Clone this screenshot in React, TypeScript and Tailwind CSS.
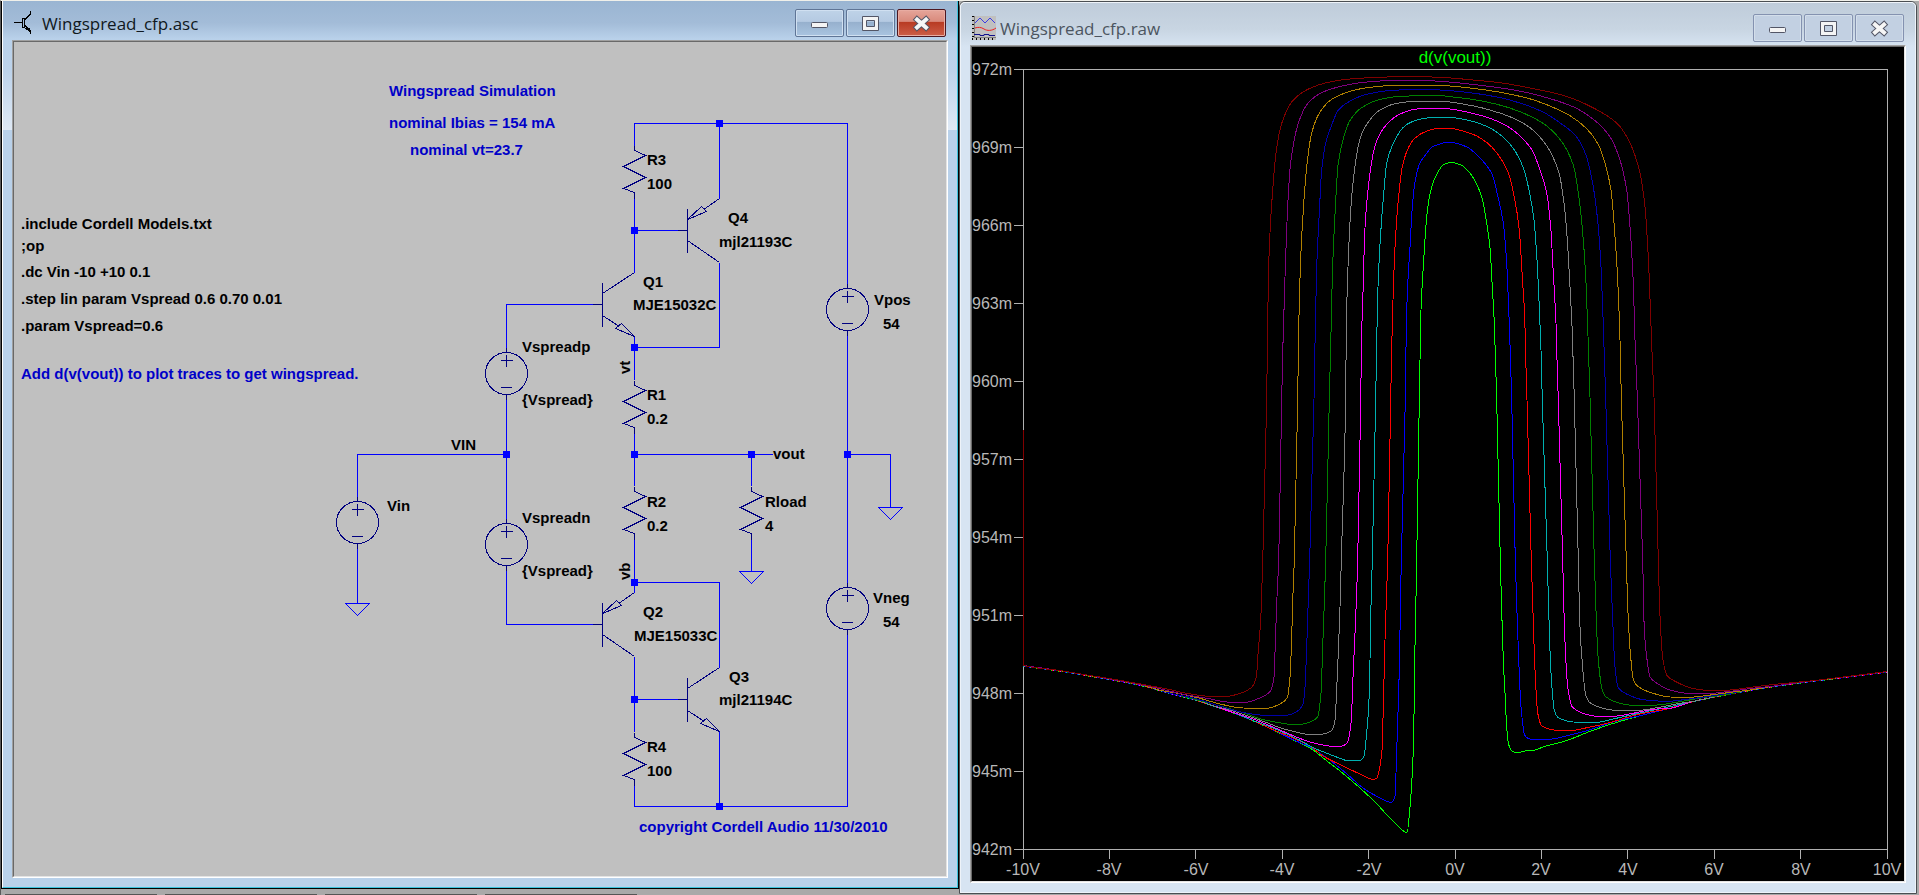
import type { ReactNode } from 'react';

type Point = [number, number];

/* ---------- plot data ---------- */

const parsePoints = (src: string): Point[] =>
  src
    .trim()
    .split(/\s+/)
    .map((pair) => pair.split(',').map(Number) as Point);

// crossover tails shared by every step of Vspread
const leftTail = parsePoints(`
  1023.5,665.5 1060,670.5 1093,676 1127,682 1150,687 1160,690 1173,693.7 1193,698.7 1213,705.3
  1233,712 1253,720 1273,729 1293,739`);

const rightTail = parsePoints(`
  1567,739.7 1587,731.7 1613,722.7 1640,715 1667,708.3 1693,701 1720,695.3 1747,690.3
  1773,686 1810,681 1843,677 1887,671.5`);

const traces = [
  {
    color: '#00ff00',
    points: `1310,748 1327,761 1340,771 1360,788 1377,804 1387,815 1397,825 1402,830 1407,832.5 1410,807 1412.3,773
      1413.7,737 1414.7,660 1415.7,613 1416.7,560 1419.3,400 1421,310 1423.7,260 1426.7,217 1430,194 1434,180
      1437,174 1443,165 1451,162.5 1460,164.5 1470,173 1478,187 1482.5,200 1486.7,223 1490,248 1492.3,287 1494,317
      1495.3,353 1496.7,400 1500.3,560 1501.7,610 1503.3,660 1505,693 1506.7,727 1508.3,743 1511.7,751 1517,752.7
      1525,751 1535,750 1543,747`,
  },
  {
    color: '#0000ff',
    points: `1310,747 1327,758 1347,774 1363,788 1378,797 1385,800.5 1391,802.5 1395,796 1396,773 1397.3,733 1399.3,670
      1400.3,613 1401.3,560 1405.3,400 1406,347 1407.3,293 1410,247 1412.3,207 1415.3,180 1420,163 1427,153
      1432,147 1440,144 1448,142 1455,143 1467,147 1480,158 1492,174 1498,197 1503.3,223 1506.7,263 1509,317
      1510.3,353 1511.7,400 1515.3,560 1517,613 1519,667 1521,707 1524.7,735 1528.3,738.5 1535,739.7 1552,739
      1567,735.7 1587,730.7 1613,722`,
  },
  {
    color: '#ff0000',
    points: `1293,738 1310,746 1323,756 1343,766 1360,774 1373,779.3 1377,778 1379.3,770 1382,750 1383.3,707 1385,640
      1386.7,590 1387.7,560 1390.7,400 1391.7,347 1393,300 1395,247 1398.3,200 1402.3,167 1408.3,148 1415,138
      1427,131 1440,128.3 1450,128.3 1460,130.3 1473,134.3 1487,142.7 1497,153 1508,172 1514.3,197 1519.3,230
      1522.3,277 1524.7,317 1525.7,357 1527,400 1531.3,560 1533,613 1535,670 1537.7,713 1541.7,725.7 1550,729.3
      1560,730.7 1573,730.3 1587,727.7 1607,723.3 1640,714`,
  },
  {
    color: '#00b0b0',
    points: `1273,728 1300,740.3 1313,747.7 1327,753.3 1340,758.3 1347,760.5 1360,760.5 1364,756 1366.7,733 1368.7,707
      1370,660 1370.7,617 1372.3,560 1375.7,400 1376.7,340 1378,287 1380.7,233 1384,190 1386.7,163 1391.7,147
      1403.3,127.3 1413,121.3 1427,118 1440,117.3 1448,117.3 1470,120.7 1490,128 1503,137 1513,148 1523,167
      1529,190 1534,220 1537,260 1539.3,307 1541,350 1542.3,400 1547.3,560 1549,620 1551,673 1554.3,710
      1558.3,717.7 1573,722 1597,722.3 1613,719 1640,713 1667,707.3`,
  },
  {
    color: '#ff00ff',
    points: `1253,719 1280,730 1297,737.3 1313,742.7 1333,746.3 1342,746 1347.3,742.7 1351,723 1353.3,670 1355.3,627
      1357.7,560 1360.7,400 1361.7,333 1363.3,283 1364.7,233 1368,190 1373.3,153 1378.3,137 1388,123 1400,114
      1417,109 1440,108.3 1450,109 1470,112.7 1490,118.3 1507,126 1520,136 1532,150 1540,170 1546.7,193
      1550.7,227 1553.3,273 1556,323 1557,360 1558.3,400 1562.7,560 1564,613 1565.7,657 1567.7,687 1572.3,707
      1583,713.3 1597,716.3 1613,716.3 1633,713.3 1657,709`,
  },
  {
    color: '#808080',
    points: `1233,711 1267,722.7 1280,727.7 1297,732.3 1310,734.5 1323,734 1330.7,731.3 1334.7,723 1336.7,690 1338.7,643
      1340,607 1341.3,560 1345.7,400 1346.3,327 1348,267 1350.3,217 1353.3,180 1359,143 1365,127 1380,110
      1397,103.3 1417,101.3 1440,101.3 1470,105.3 1490,110 1513,118 1530,127.7 1546.7,145.7 1559,173 1564,203
      1567.3,240 1570,287 1572.3,333 1574.3,400 1578.3,560 1580,627 1582.3,663 1585.7,695 1590,702.7 1603,708.3
      1617,710.5 1637,710.5 1657,707.7 1680,703.3`,
  },
  {
    color: '#008000',
    points: `1220,706 1247,714 1260,718.7 1277,722.3 1293,724.5 1303,724 1313,720.7 1317.7,716.7 1321,693 1322.7,647
      1324.3,603 1325.7,560 1329.3,400 1331,333 1332.3,277 1334.7,220 1338.3,163 1345,133 1350.7,119.3
      1361.7,107.7 1377,100.3 1400,96.3 1440,95.5 1447,96.3 1470,99 1497,104.3 1520,111.7 1543,123.3 1560,139.3
      1573.3,165 1579.3,200 1583.3,240 1586,283 1587.7,327 1590,397 1594.3,560 1596.3,620 1598.3,660 1602.3,690
      1606,697 1623,704 1637,705.7 1657,705 1680,701.7 1707,697`,
  },
  {
    color: '#0000a8',
    points: `1193,698 1233,710 1250,713.7 1273,716 1288,715 1298,710.7 1303.3,703 1305,687 1306.7,647 1308.3,600
      1309.7,560 1314,400 1315.3,327 1316.7,267 1319.3,213 1321.7,170 1325.7,143 1331.7,125 1338.3,110 1350,101
      1367,94.3 1390,90.5 1417,89.5 1440,90 1470,92.7 1497,97 1523,104 1543,112 1563,125 1575,135 1586,155
      1593.3,187 1598.3,227 1601,267 1603,317 1605.7,397 1610.3,560 1612.7,620 1615,667 1618.3,688 1627,694.3
      1643,699.7 1667,701.3 1687,699.3 1713,695.7`,
  },
  {
    color: '#b08000',
    points: `1176,693 1200,698.3 1220,704 1243,708 1267,708.3 1280,704 1287.3,697.7 1290,677 1291.7,637 1293,593
      1294.3,560 1297.7,400 1298.7,327 1300.3,267 1303.3,210 1306.7,167 1311.7,133 1320,112 1331.7,99.3
      1347,92.3 1367,87.7 1393,85.5 1440,85.5 1470,88 1497,91.7 1527,98 1550,106 1570,115.7 1587,129 1598,144
      1605,163 1611,190 1614.3,227 1617.7,280 1620,340 1621.3,397 1626.3,560 1628.3,620 1630.7,657 1633,678
      1637,685.7 1650,692.3 1670,697 1688,697.3 1713,694.7 1733,692`,
  },
  {
    color: '#800080',
    points: `1150,686.5 1187,695 1207,698.3 1227,702 1243,702.7 1260,698 1270,691.7 1274,677 1275.3,643 1277,597
      1278.7,560 1281.7,400 1282.7,353 1285,277 1288,200 1291,160 1298.3,123.3 1308.3,102.7 1323,92 1337,87.3
      1360,82.7 1393,80.5 1420,80.5 1440,81.3 1480,85.3 1510,89.3 1537,95 1573,106.7 1593,119 1610,136.7
      1619,157 1626.7,190 1630,227 1633.3,283 1635,340 1637.3,397 1642.7,560 1644.3,630 1646.7,657 1650,677
      1657,683.3 1670,690 1687,693.3 1707,693.7 1727,691.7 1753,688.3`,
  },
  {
    color: '#800000',
    points: `1023.5,430 1023.6,665.5 1060,670.5 1093,676 1109,678.5 1153,686.3 1167,689 1187,693.3 1210,696.3
      1227,696.3 1243,692.3 1251.7,687.3 1256.3,677 1258.3,650 1260.7,620 1262.7,560 1266.7,400 1267.7,320
      1269.3,247 1272.7,190 1276,153 1281.7,123.3 1293.3,100 1310,88.3 1328,82.3 1353,78.7 1380,77.3 1407,76.5
      1440,77.3 1473,80 1500,82.7 1530,88 1563,95.3 1593,107.7 1617,123.3 1630,143 1640,173 1645,207 1648.3,257
      1650.7,317 1652.3,360 1654,397 1658.3,560 1660.3,623 1663,660 1667.3,676 1677,682.3 1692,688.3 1710,690.5
      1730,690 1753,687 1773,684.5`,
  },
];

// monotone cubic through the points, so steep edges never overshoot
const tracePath = (pts: Point[]) => {
  const n = pts.length;
  const slope = pts.slice(1).map(([x, y], i) => (y - pts[i][1]) / (x - pts[i][0]));
  const tangent = pts.map((_, i) => {
    if (i === 0) return slope[0];
    if (i === n - 1) return slope[n - 2];
    const a = slope[i - 1];
    const b = slope[i];
    return a * b <= 0 ? 0 : (2 * a * b) / (a + b);
  });
  let d = `M${pts[0][0]} ${pts[0][1]}`;
  for (let i = 1; i < n; i++) {
    const [x0, y0] = pts[i - 1];
    const [x1, y1] = pts[i];
    const h = (x1 - x0) / 3;
    d += `C${x0 + h} ${y0 + h * tangent[i - 1]} ${x1 - h} ${y1 - h * tangent[i]} ${x1} ${y1}`;
  }
  return d;
};

// each step sits a hair below the next one in the tails
const buildTrace = (src: string, index: number) => {
  const own = parsePoints(src);
  const first = own[0][0];
  const last = own[own.length - 1][0];
  const sink = ([x, y]: Point): Point => [x, y + (traces.length - 1 - index) * 0.08];
  return tracePath([
    ...leftTail.filter(([x]) => x < first - 8).map(sink),
    ...own,
    ...rightTail.filter(([x]) => x > last + 8).map(sink),
  ]);
};

const yTicks = [972, 969, 966, 963, 960, 957, 954, 951, 948, 945, 942];
const xTicks = [-10, -8, -6, -4, -2, 0, 2, 4, 6, 8, 10];

const Waveforms = () => (
  <svg
    className="block size-full bg-black"
    viewBox="972 47 932 834"
    preserveAspectRatio="xMidYMid meet"
    role="img"
    aria-label="d(v(vout))"
  >
    <g fill="none" stroke="#b0b0b0" shapeRendering="crispEdges">
      <path d="M1023.5 69.5H1887.5V849.5H1023.5Z" />
      {yTicks.map((v, i) => (
        <path key={v} d={`M1014 ${69.5 + i * 78}H1023`} />
      ))}
      {xTicks.map((v, i) => (
        <path key={v} d={`M${Math.floor(1023 + i * 86.4) + 0.5} 849V859`} />
      ))}
    </g>
    <g fill="none" shapeRendering="crispEdges">
      {traces.map((t, i) => (
        <path key={t.color} d={buildTrace(t.points, i)} stroke={t.color} />
      ))}
    </g>
    <g className="fill-[#b8b8b8] font-['Liberation_Sans',Arial,sans-serif] text-[16px]">
      {yTicks.map((v, i) => (
        <text key={v} x="972" y={75 + i * 78}>
          {v}m
        </text>
      ))}
      {xTicks.map((v, i) => (
        <text key={v} x={Math.round(1023 + i * 86.4)} y="875" textAnchor="middle">
          {v}V
        </text>
      ))}
    </g>
    <text
      x="1455"
      y="63"
      textAnchor="middle"
      className="fill-[#00ff00] font-['Liberation_Sans',Arial,sans-serif] text-[17px]"
    >
      d(v(vout))
    </text>
  </svg>
);

/* ---------- schematic symbols ---------- */

type Placed = { x: number; y: number };

const Resistor = ({ x, y }: Placed) => (
  <path d={`M${x} ${y - 5}v5l11 5l-22 11l22 11l-22 11l11 4v6`} />
);

const Source = ({ x, y }: Placed) => (
  <g>
    <circle cx={x} cy={y} r="21" />
    <path d={`M${x} ${y - 26}v5M${x} ${y + 21}v5M${x - 6} ${y - 13}h12M${x} ${y - 19}v12M${x - 6} ${y + 14}h11`} />
  </g>
);

const Npn = ({ x, y }: Placed) => (
  <path
    d={`M${x - 10} ${y}h10M${x} ${y - 22}v44M${x} ${y - 11}l32 -21M${x} ${y + 11}l16 10.5M${x + 32} ${y + 32}l-13 -13l-6 5z`}
  />
);

const Pnp = ({ x, y }: Placed) => (
  <path
    d={`M${x - 10} ${y}h10M${x} ${y - 22}v44M${x} ${y + 10}l32 22M${x + 32} ${y - 32}l-15 10.5M${x} ${y - 11}l14 -13l5 5z`}
  />
);

const Ground = ({ x, y }: Placed) => <path d={`M${x - 12} ${y}h24l-12 12z`} />;

const wires = [
  'M634.5 145.5V123.5H847.5V283.5',
  'M719.5 123.5V198.5',
  'M634.5 198V273',
  'M634.5 230.5H678',
  'M719.5 262.5V347.5H634.5',
  'M634.5 336.5V380',
  'M506.5 348V304.5H593',
  'M506.5 399V519',
  'M506.5 570V624.5H593',
  'M634.5 433V486',
  'M634.5 454.5H773',
  'M751.5 454.5V486',
  'M751.5 539V571.5',
  'M847.5 335V583',
  'M847.5 454.5H890.5V507.5',
  'M506.5 454.5H357.5V497',
  'M357.5 548V603.5',
  'M634.5 539V592.5',
  'M634.5 582.5H719.5V667.5',
  'M634.5 656.5V732',
  'M634.5 699.5H678',
  'M634.5 784V806.5H847.5V634',
  'M719.5 731.5V806.5',
];

const nodes: Point[] = [
  [719, 123],
  [634, 230],
  [634, 347],
  [506, 454],
  [634, 454],
  [751, 454],
  [847, 454],
  [634, 582],
  [634, 699],
  [719, 806],
];

const comments: [number, number, string][] = [
  [389, 96, 'Wingspread Simulation'],
  [389, 128, 'nominal Ibias = 154 mA'],
  [410, 155, 'nominal vt=23.7'],
  [21, 379, 'Add d(v(vout)) to plot traces to get wingspread.'],
  [639, 832, 'copyright Cordell Audio 11/30/2010'],
];

const labels: [number, number, string][] = [
  [21, 229, '.include Cordell Models.txt'],
  [21, 251, ';op'],
  [21, 277, '.dc Vin -10 +10 0.1'],
  [21, 304, '.step lin param Vspread 0.6 0.70 0.01'],
  [21, 331, '.param Vspread=0.6'],
  [647, 165, 'R3'],
  [647, 189, '100'],
  [728, 223, 'Q4'],
  [719, 247, 'mjl21193C'],
  [643, 287, 'Q1'],
  [633, 310, 'MJE15032C'],
  [874, 305, 'Vpos'],
  [883, 329, '54'],
  [522, 352, 'Vspreadp'],
  [522, 405, '{Vspread}'],
  [647, 400, 'R1'],
  [647, 424, '0.2'],
  [451, 450, 'VIN'],
  [387, 511, 'Vin'],
  [522, 523, 'Vspreadn'],
  [522, 576, '{Vspread}'],
  [773, 459, 'vout'],
  [647, 507, 'R2'],
  [647, 531, '0.2'],
  [765, 507, 'Rload'],
  [765, 531, '4'],
  [643, 617, 'Q2'],
  [634, 641, 'MJE15033C'],
  [729, 682, 'Q3'],
  [719, 705, 'mjl21194C'],
  [647, 752, 'R4'],
  [647, 776, '100'],
  [873, 603, 'Vneg'],
  [883, 627, '54'],
];

const Schematic = () => (
  <svg
    className="block size-full bg-[#c0c0c0] font-['Liberation_Sans',Arial,sans-serif] text-[15px] font-bold"
    viewBox="14 42 932 834"
    preserveAspectRatio="xMidYMid meet"
    role="img"
    aria-label="Wingspread_cfp.asc"
  >
    <g fill="none" stroke="#0000ff" shapeRendering="crispEdges">
      {wires.map((d) => (
        <path key={d} d={d} />
      ))}
      <Ground x={357.5} y={603.5} />
      <Ground x={751.5} y={571.5} />
      <Ground x={890.5} y={507.5} />
    </g>
    <g fill="none" stroke="#000080" shapeRendering="crispEdges">
      <Resistor x={634.5} y={150.5} />
      <Resistor x={634.5} y={385.5} />
      <Resistor x={634.5} y={491.5} />
      <Resistor x={751.5} y={491.5} />
      <Resistor x={634.5} y={737.5} />
      <Source x={847.5} y={309.5} />
      <Source x={506.5} y={373.5} />
      <Source x={506.5} y={544.5} />
      <Source x={357.5} y={522.5} />
      <Source x={847.5} y={608.5} />
      <Npn x={602.5} y={304.5} />
      <Npn x={687.5} y={699.5} />
      <Pnp x={687.5} y={230.5} />
      <Pnp x={602.5} y={624.5} />
    </g>
    <g fill="#0000ff">
      {nodes.map(([x, y]) => (
        <rect key={`${x}-${y}`} x={x - 3} y={y - 3} width="7" height="7" />
      ))}
    </g>
    <g className="fill-[#0000c8]">
      {comments.map(([x, y, text]) => (
        <text key={text} x={x} y={y}>
          {text}
        </text>
      ))}
    </g>
    <g className="fill-black">
      {labels.map(([x, y, text]) => (
        <text key={`${x}-${y}`} x={x} y={y}>
          {text}
        </text>
      ))}
      <text transform="translate(630 374) rotate(-90)">vt</text>
      <text transform="translate(630 580) rotate(-90)">vb</text>
    </g>
  </svg>
);

/* ---------- window chrome ---------- */

const TransistorIcon = () => (
  <svg className="h-6 w-5 shrink-0" viewBox="0 0 20 24" fill="none" stroke="#000" shapeRendering="crispEdges">
    <path d="M0 11.5h8" />
    <path d="M8.5 7.5h2v9h-2z" />
    <path d="M11 8.5l5.500 -5.500v-3M11 14.500l5.500 5.500v3" />
    <path d="M12 17.500h3.500v3z" fill="#000" />
  </svg>
);

const PlotIcon = () => (
  <svg className="size-6 shrink-0" viewBox="0 0 24 24" fill="none">
    <rect width="24" height="24" fill="#c0c0c0" />
    <path d="M1 0v24M0 23h24" stroke="#000" strokeWidth="2" strokeDasharray="1 3" />
    <path d="M2.5 0v22M2 21.5h22" stroke="#808080" />
    <path d="M3 7l5 -5l5 5l5 -5l5 5" stroke="#3c3ce6" />
    <path d="M3 12c3 -1 6 -1 9 1s8 2 12 -1" stroke="#f02020" />
    <path d="M2 18.5h6v1h4v-1h5v1h6" stroke="#10108c" />
  </svg>
);

const MinimizeGlyph = () => (
  <svg className="h-[17px] w-[19px]" viewBox="0 0 19 17">
    <rect x="1.5" y="7.5" width="16" height="5" rx="1" fill="#f4f4f4" stroke="#535666" />
  </svg>
);

const MaximizeGlyph = () => (
  <svg className="h-[17px] w-[19px]" viewBox="0 0 19 17" stroke="#535666">
    <path
      d="M1.5 1.5h16v14h-16zM5.5 5.5v6h8v-6z"
      fill="#f4f4f4"
      fillRule="evenodd"
      strokeLinejoin="round"
    />
  </svg>
);

const CloseGlyph = () => (
  <svg className="h-[17px] w-[19px]" viewBox="0 0 19 17" fill="none" strokeLinecap="square">
    <path d="M5 4.5L14 12.5M14 4.5L5 12.5" stroke="#535666" strokeWidth="6" />
    <path d="M5 4.5L14 12.5M14 4.5L5 12.5" stroke="#f6f6f6" strokeWidth="4" />
  </svg>
);

const buttonBase = 'flex h-7 w-[49px] items-center justify-center rounded-[2px] border';
const activeButton =
  'border-[#5f7596] bg-[linear-gradient(#bfd3e8_0%,#b5cae2_44%,#96b0cd_46%,#a9c4e0_100%)] shadow-[inset_0_0_0_1px_#d0e0f1]';
const inactiveButton = 'border-[#8492b0] bg-[#c2d0e2] shadow-[inset_0_0_0_1px_#d3deea]';
const activeClose =
  'border-[#4d1720] bg-[linear-gradient(#e5a59a_0%,#d98a7c_44%,#b83a22_46%,#cc5e48_100%)] shadow-[inset_0_0_0_1px_#e8aca2]';

const WindowButtons = ({ active }: { active: boolean }) => (
  <div className="ml-auto flex gap-0.5">
    <button type="button" aria-label="Minimize" className={`${buttonBase} ${active ? activeButton : inactiveButton}`}>
      <MinimizeGlyph />
    </button>
    <button type="button" aria-label="Maximize" className={`${buttonBase} ${active ? activeButton : inactiveButton}`}>
      <MaximizeGlyph />
    </button>
    <button type="button" aria-label="Close" className={`${buttonBase} ${active ? activeClose : inactiveButton}`}>
      <CloseGlyph />
    </button>
  </div>
);

const Client = ({ children }: { children: ReactNode }) => (
  <div className="min-h-0 flex-1 border border-t-[#a0a0a0] border-r-white border-b-white border-l-[#a0a0a0]">
    <div className="h-full border border-t-[#696969] border-r-[#e3e3e3] border-b-[#e3e3e3] border-l-[#696969]">
      {children}
    </div>
  </div>
);

const SchematicWindow = () => (
  <section className="flex min-h-0 flex-1 flex-col border-x border-b border-black">
    <div className="flex min-h-0 flex-1 flex-col border-r border-b border-l border-r-[#3cc3dc] border-b-[#3cc3dc] border-l-white bg-[#b9d1ea] bg-[linear-gradient(#9ab5d2_0px,#a3bcd8_22px,#b9d1ea_38px,#bdd3eb_70px,#dfe9f5_129px)] bg-[length:100%_129px] bg-no-repeat px-[9px] pb-[9px]">
      <header className="flex h-[39px] items-center gap-2 px-0.5 pt-[5px]">
        <TransistorIcon />
        <h1 className="pt-0.5 font-['Open_Sans','Segoe_UI',sans-serif] text-[17px] leading-6 text-[#101820]">
          Wingspread_cfp.asc
        </h1>
        <WindowButtons active />
      </header>
      <Client>
        <Schematic />
      </Client>
    </div>
  </section>
);

const PlotWindow = () => (
  <section className="flex min-h-0 flex-1 flex-col rounded-t-[6px] border border-[#4a4e52] bg-white">
    <div className="flex min-h-0 flex-1 flex-col rounded-t-[5px] border border-[#eef3f9] bg-[#d7e4f2] bg-[linear-gradient(#bfccda_0px,#c8d5e2_26px,#d7e4f2_44px)] bg-[length:100%_44px] bg-no-repeat px-[9px] pb-[9px]">
      <header className="flex h-[42px] items-center gap-1 px-0.5 pt-2">
        <PlotIcon />
        <h1 className="pt-0.5 font-['Open_Sans','Segoe_UI',sans-serif] text-[17px] leading-6 text-[#4c5560]">
          Wingspread_cfp.raw
        </h1>
        <WindowButtons active={false} />
      </header>
      <Client>
        <Waveforms />
      </Client>
    </div>
  </section>
);

export default function App() {
  return (
    <main className="flex h-screen overflow-hidden border-t border-l border-t-[#f0f0ea] border-l-[#5a5a5a] bg-[#a9a9a9] pr-0.5">
      <div className="flex min-w-0 flex-1 flex-col">
        <SchematicWindow />
        <footer className="flex h-1.5 items-end gap-2 pl-1">
          <div className="h-px w-[152px] bg-[#555]" />
          <div className="h-px w-[152px] bg-[#555]" />
          <div className="h-px w-[152px] bg-[#555]" />
          <div className="h-px w-[152px] bg-[#555]" />
        </footer>
      </div>
      <div className="flex min-w-0 flex-1 flex-col pb-px">
        <PlotWindow />
      </div>
    </main>
  );
}
